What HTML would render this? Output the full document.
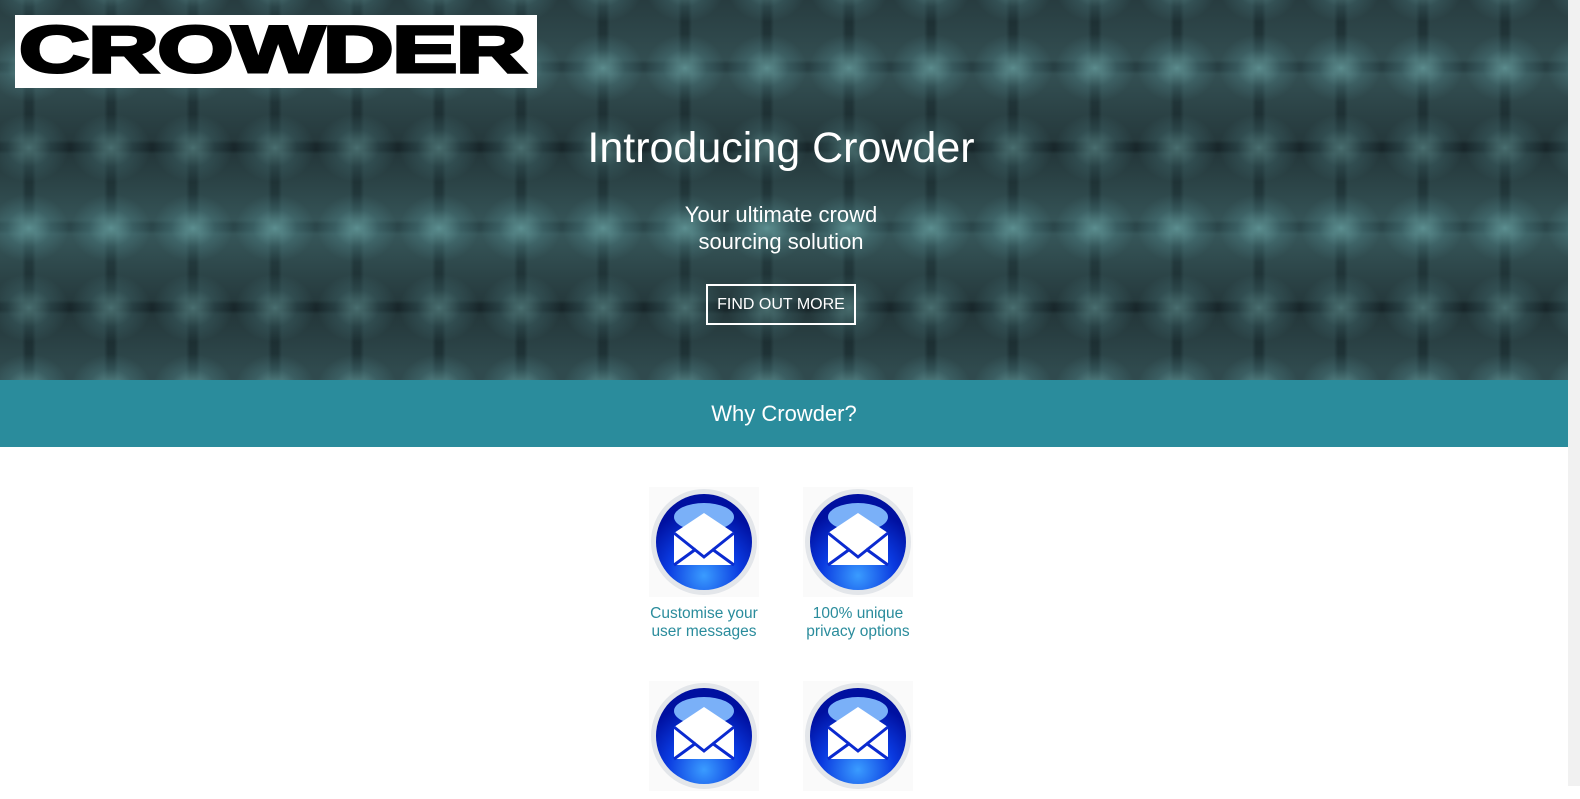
<!DOCTYPE html>
<html><head><meta charset="utf-8"><style>
body{margin:0;width:1580px;height:786px;overflow:hidden;font-family:"Liberation Sans",Arial,sans-serif;background:#fff;position:relative}
.hero{position:absolute;left:0;top:0;width:1568px;height:380px;background-color:#2c4347;
background-image:
radial-gradient(ellipse 40px 34px at 41px 40px,rgba(120,180,180,.7),rgba(80,130,135,.35) 55%,transparent 100%),
linear-gradient(90deg,transparent 0 34px,rgba(10,20,25,.45) 38px 44px,transparent 48px),
linear-gradient(0deg,transparent 0 34px,rgba(10,20,25,.4) 38px 44px,transparent 48px);
background-size:82px 80px,82px 80px,82px 80px;background-position:-12px 28px,-12px 28px,-12px 28px}
.hero:before{content:"";position:absolute;inset:0;background:linear-gradient(180deg,rgba(0,0,0,.1) 0,rgba(100,160,160,.15) 70px,rgba(0,0,0,.2) 150px,rgba(100,170,170,.2) 230px,rgba(0,0,0,.2) 310px,rgba(80,140,140,.1) 370px)}
.logo{position:absolute;left:15px;top:15px;width:522px;height:73px;background:#fff;overflow:hidden}
.logo span{position:absolute;left:4px;top:-7px;font:900 64px "Liberation Sans",sans-serif;color:#000;transform:scale(1.53,1.03);transform-origin:0 0;letter-spacing:-1px;-webkit-text-stroke:3px #000;line-height:80px}
h1{position:absolute;left:0;width:1562px;top:124px;margin:0;text-align:center;color:#fff;font-weight:normal;font-size:43px}
.sub{position:absolute;left:0;width:1562px;top:201px;text-align:center;color:#fff;font-size:22px;line-height:27px}
.btn{position:absolute;left:706px;top:284px;width:146px;height:37px;border:2px solid #fff;color:#fff;font-size:16px;line-height:37px;text-align:center}
.band{position:absolute;left:0;top:380px;width:1568px;height:67px;background:#2a8c9c;color:#fff;text-align:center;font-size:22px;line-height:67px}
.sb{position:absolute;right:0;top:0;width:12px;height:786px;background:#f1f1f1}
.it{position:absolute;width:110px;text-align:center;color:#2a8c9c;font-size:15.5px;line-height:18px}
.it svg{display:block;margin:0 auto 8px}
</style></head><body>
<div class="hero">
<div class="logo"><span>CROWDER</span></div>
<h1>Introducing Crowder</h1>
<div class="sub">Your ultimate crowd<br>sourcing solution</div>
<div class="btn">FIND OUT MORE</div>
</div>
<div class="band">Why Crowder?</div>
<div class="sb"></div>
<svg width="0" height="0" style="position:absolute"><defs>
<radialGradient id="g" cx="50%" cy="85%" r="70%"><stop offset="0" stop-color="#3a9cff"/><stop offset=".55" stop-color="#0a3ae0"/><stop offset="1" stop-color="#0010a0"/></radialGradient>
<symbol id="ic" viewBox="0 0 110 110"><rect width="110" height="110" fill="#fafafa"/><circle cx="55" cy="55" r="53" fill="#e3e6ea"/><circle cx="55" cy="55" r="48" fill="url(#g)"/><ellipse cx="55" cy="30" rx="30" ry="14" fill="#7ab0f8"/><path d="M25 46 L55 26 L85 46 L85 78 L25 78Z" fill="#fff"/><path d="M25 46 L55 70 L85 46 M25 78 L47 62 M85 78 L63 62" stroke="#0a2ad0" stroke-width="3" fill="none"/></symbol></defs></svg>
<div class="it" style="left:649px;top:487px"><svg width="110" height="110"><use href="#ic"/></svg>Customise your<br>user messages</div>
<div class="it" style="left:803px;top:487px"><svg width="110" height="110"><use href="#ic"/></svg>100% unique<br>privacy options</div>
<div class="it" style="left:649px;top:681px"><svg width="110" height="110"><use href="#ic"/></svg></div>
<div class="it" style="left:803px;top:681px"><svg width="110" height="110"><use href="#ic"/></svg></div>
</body></html>
